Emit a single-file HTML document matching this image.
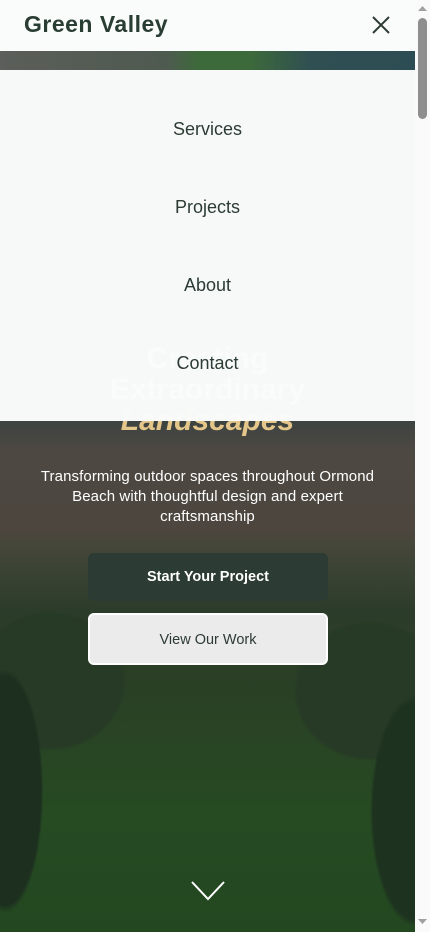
<!DOCTYPE html>
<html><head><meta charset="utf-8"><style>
*{margin:0;padding:0;box-sizing:border-box}
body{width:430px;height:932px;overflow:hidden;position:relative;background:#fff;font-family:"Liberation Sans",sans-serif}
.page{position:absolute;left:0;top:0;width:415px;height:932px;overflow:hidden}
.bg{position:absolute;left:0;top:51px;width:415px;height:881px;
background:
radial-gradient(ellipse 60px 190px at 5px 740px,#1d3020 0,#1d3020 60%,transparent 64%),
radial-gradient(ellipse 70px 180px at 415px 760px,#1e3220 0,#1e3220 60%,transparent 64%),
radial-gradient(ellipse 120px 110px at 50px 630px,#263a26 0,#263a26 60%,transparent 64%),
radial-gradient(ellipse 120px 110px at 370px 640px,#263a26 0,#263a26 60%,transparent 64%),
linear-gradient(#3a4a48 0,#3c4340 370px,#4d4842 400px,#4c463e 480px,#3e4536 510px,#2c3c2a 560px,#2a4025 640px,#264a22 760px,#234720 881px)}
.strip{position:absolute;left:0;top:51px;width:415px;height:19px;background:linear-gradient(90deg,#5b5e5a 0,#4e5a50 40%,#3d6a3a 48%,#3d6a3a 60%,#2f4f52 75%,#2d4d55 100%)}
.title{position:absolute;left:0;width:415px;text-align:center;top:343px;font-weight:bold;font-size:30px;line-height:31px;color:#fff}
.title i{color:#e4c68a}
.sub{position:absolute;left:36px;width:343px;top:467px;text-align:center;color:#fff;font-size:15px;line-height:20px;letter-spacing:0.1px}
.btn{position:absolute;left:88px;width:240px;text-align:center;font-size:14.5px;border-radius:6px}
.b1{top:553px;height:48px;line-height:48px;background:#2c3b34;color:#fff;font-weight:bold}
.b2{top:613px;height:52px;line-height:50px;background:#ebebeb;color:#2c3b34;border:2px solid #fff}
.hdr{position:absolute;left:0;top:0;width:415px;height:51px;background:#fafbfb}
.logo{position:absolute;left:24px;top:11px;font-size:23px;font-weight:bold;color:#2a3d33;letter-spacing:0.5px}
.menu{position:absolute;left:0;top:70px;width:415px;height:351px;background:rgba(250,251,251,0.985)}
.menu div{position:absolute;left:0;width:415px;text-align:center;font-size:18px;color:#2c3b34}
.sb{position:absolute;left:415px;top:0;width:15px;height:932px;background:#fafafa}
.thumb{position:absolute;left:418px;top:18px;width:9px;height:101px;border-radius:5px;background:#8e8e8e}
</style></head><body>
<div class="page">
<div class="bg"></div>
<div class="strip"></div>
<div class="title">Creating<br>Extraordinary<br><i>Landscapes</i></div>
<div class="sub">Transforming outdoor spaces throughout Ormond Beach with thoughtful design and expert craftsmanship</div>
<div class="btn b1">Start Your Project</div>
<div class="btn b2">View Our Work</div>
<svg style="position:absolute;left:190px;top:880px" width="36" height="22" viewBox="0 0 36 22"><path d="M2 2 L18 19 L34 2" fill="none" stroke="#fff" stroke-width="2"/></svg>
<div class="menu">
<div style="top:49px">Services</div>
<div style="top:127px">Projects</div>
<div style="top:205px">About</div>
<div style="top:283px">Contact</div>
</div>
<div class="hdr"><div class="logo">Green Valley</div>
<svg style="position:absolute;left:372px;top:16px" width="18" height="18" viewBox="0 0 18 18"><path d="M1 1L17 17M17 1L1 17" stroke="#2c3b34" stroke-width="2"/></svg></div>
</div>
<div class="sb"></div><div class="thumb"></div>
<svg style="position:absolute;left:417px;top:5px" width="11" height="7"><path d="M1 6L5.5 1L10 6Z" fill="#a0a0a0"/></svg>
<svg style="position:absolute;left:417px;top:918px" width="11" height="7"><path d="M1 1L5.5 6L10 1Z" fill="#a0a0a0"/></svg>
</body></html>
